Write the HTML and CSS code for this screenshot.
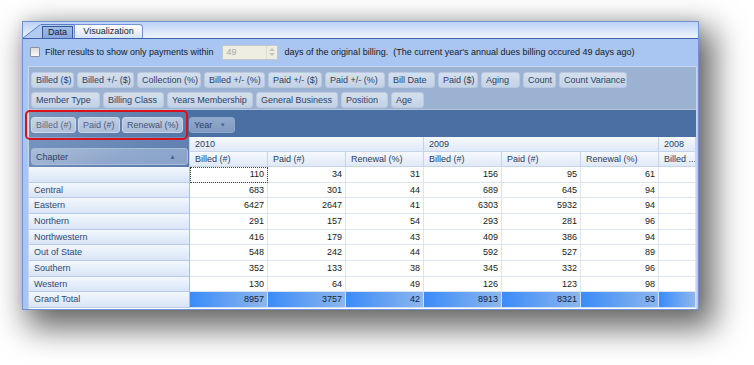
FILE: index.html
```html
<!DOCTYPE html>
<html>
<head>
<meta charset="utf-8">
<link rel="stylesheet" href="styles.css">
</head>
<body>
<div class="window">
  <div class="tabstrip">
    <svg class="slant" width="18" height="14" viewBox="0 0 18 14"><polygon points="0,14 17.5,0.5 18,0.5 18,14" fill="#b3cbf0"/><line x1="0" y1="14" x2="17.5" y2="0.5" stroke="#5a7ec3" stroke-width="1"/></svg>
    <div class="tab tab-active"><span class="tab-label">Data</span></div>
    <div class="tab tab-plain">Visualization</div>
  </div>
  <div class="filter">
    <span class="check"></span>
    <span class="ftext">Filter results to show only payments within</span>
    <span class="spin"><span class="spin-val">49</span><span class="spin-btns"><i class="up"></i><i class="down"></i></span></span>
    <span class="ftext">days of the original billing.&nbsp; (The current year's annual dues billing occured 49 days ago)</span>
  </div>
  <div class="panel">
    <div class="fields">
      <div class="frow r1">
        <div class="fbtn">Billed ($)</div>
        <div class="fbtn">Billed +/- ($)</div>
        <div class="fbtn">Collection (%)</div>
        <div class="fbtn">Billed +/- (%)</div>
        <div class="fbtn">Paid +/- ($)</div>
        <div class="fbtn">Paid +/- (%)</div>
        <div class="fbtn">Bill Date</div>
        <div class="fbtn">Paid ($)</div>
        <div class="fbtn">Aging</div>
        <div class="fbtn">Count</div>
        <div class="fbtn">Count Variance</div>
      </div>
      <div class="frow r2">
        <div class="fbtn">Member Type</div>
        <div class="fbtn">Billing Class</div>
        <div class="fbtn">Years Membership</div>
        <div class="fbtn">General Business</div>
        <div class="fbtn">Position</div>
        <div class="fbtn">Age</div>
      </div>
    </div>
    <div class="pivot">
      <div class="band">
        <div class="datafields">
          <div class="fbtn dbtn w45">Billed (#)</div>
          <div class="fbtn dbtn w42">Paid (#)</div>
          <div class="fbtn dbtn w61">Renewal (%)</div>
        </div>
        <div class="fbtn year">Year <span class="arrow">&#9660;</span></div>
      </div>
      <div class="rowarea"><div class="chapter"><span>Chapter</span><span class="sort">&#9650;</span></div></div>

      <div class="ch span3">2010</div>
      <div class="ch span3">2009</div>
      <div class="ch">2008</div>
      <div class="ch">Billed (#)</div>
      <div class="ch">Paid (#)</div>
      <div class="ch">Renewal (%)</div>
      <div class="ch">Billed (#)</div>
      <div class="ch">Paid (#)</div>
      <div class="ch">Renewal (%)</div>
      <div class="ch">Billed ...</div>

      <div class="rh"></div>
      <div class="c focus">110</div><div class="c">34</div><div class="c">31</div><div class="c">156</div><div class="c">95</div><div class="c">61</div><div class="c"></div>
      <div class="rh">Central</div>
      <div class="c">683</div><div class="c">301</div><div class="c">44</div><div class="c">689</div><div class="c">645</div><div class="c">94</div><div class="c"></div>
      <div class="rh">Eastern</div>
      <div class="c">6427</div><div class="c">2647</div><div class="c">41</div><div class="c">6303</div><div class="c">5932</div><div class="c">94</div><div class="c"></div>
      <div class="rh">Northern</div>
      <div class="c">291</div><div class="c">157</div><div class="c">54</div><div class="c">293</div><div class="c">281</div><div class="c">96</div><div class="c"></div>
      <div class="rh">Northwestern</div>
      <div class="c">416</div><div class="c">179</div><div class="c">43</div><div class="c">409</div><div class="c">386</div><div class="c">94</div><div class="c"></div>
      <div class="rh">Out of State</div>
      <div class="c">548</div><div class="c">242</div><div class="c">44</div><div class="c">592</div><div class="c">527</div><div class="c">89</div><div class="c"></div>
      <div class="rh">Southern</div>
      <div class="c">352</div><div class="c">133</div><div class="c">38</div><div class="c">345</div><div class="c">332</div><div class="c">96</div><div class="c"></div>
      <div class="rh">Western</div>
      <div class="c">130</div><div class="c">64</div><div class="c">49</div><div class="c">126</div><div class="c">123</div><div class="c">98</div><div class="c"></div>
      <div class="rh">Grand Total</div>
      <div class="c gt">8957</div><div class="c gt">3757</div><div class="c gt">42</div><div class="c gt">8913</div><div class="c gt">8321</div><div class="c gt">93</div><div class="c gt"></div>

      <div class="annot"></div>
    </div>
  </div>
</div>
</body>
</html>
```
FILE: styles.css
```css
* { box-sizing: border-box; }
html, body { margin: 0; padding: 0; background: #fff; }
body {
  font-family: "Liberation Sans", Arial, sans-serif;
  font-size: 9px;
  color: #1d1d1d;
  width: 754px;
  height: 365px;
  overflow: hidden;
}
.window {
  margin: 21px 0 0 22px;
  width: 677px;
  height: 289px;
  border: 1px solid #6f93d2;
  background: #a9c5f1;
  box-shadow: 10px 13px 30px 5px rgba(0, 0, 0, 0.6), 0 -2px 10px rgba(0, 0, 0, 0.08);
  display: flex;
  flex-direction: column;
}
.tabstrip {
  height: 17px;
  flex: none;
  background: linear-gradient(#bcd2f5, #eef4fd);
  border-bottom: 1px solid #3d62ad;
  display: flex;
  align-items: flex-end;
}
.slant { display: block; flex: none; }
.tab {
  height: 14px;
  line-height: 12px;
  text-align: center;
  color: #111a30;
}
.tab-active {
  width: 33px;
  background: #b3cbf0;
  border-top: 1px solid #5a7ec3;
  padding: 1px 1px 0 1px;
}
.tab-label {
  display: block;
  height: 12px;
  line-height: 10px;
  border: 1px solid #36579a;
  border-bottom: none;
  background: linear-gradient(#9fbde8, #86a8dd);
}
.tab-plain {
  width: 69px;
  border: 1px solid #6e92d2;
  border-bottom: none;
  border-radius: 0 4px 0 0;
  background: linear-gradient(#ffffff, #d6e4fa);
}
.filter {
  height: 26px;
  flex: none;
  display: flex;
  align-items: center;
  padding-left: 7px;
  color: #141a28;
}
.check {
  width: 10px;
  height: 10px;
  border: 1px solid #8d8f94;
  border-radius: 1px;
  background: linear-gradient(#dcdcdc, #fafafa);
  margin-right: 5px;
}
.spin {
  display: flex;
  width: 56px;
  height: 15px;
  margin: 0 7px 0 8px;
  border: 1px solid #c4c7cc;
  background: #eeeee3;
}
.spin-val {
  flex: 1;
  padding-left: 4px;
  line-height: 13px;
  color: #a9a99e;
}
.spin-btns {
  width: 11px;
  display: flex;
  flex-direction: column;
  align-items: center;
  justify-content: space-around;
  border-left: 1px solid #dcdcd4;
  padding: 2px 0;
}
.spin-btns i {
  width: 0;
  height: 0;
  border-left: 3px solid transparent;
  border-right: 3px solid transparent;
}
.spin-btns .up { border-bottom: 3px solid #c3c3bb; }
.spin-btns .down { border-top: 3px solid #c3c3bb; }

.panel {
  flex: 1;
  margin: 1px 1px 0 5px;
  border: 1px solid #c9d6e8;
  border-bottom: none;
  display: flex;
  flex-direction: column;
  background: #fff;
}
.fields {
  height: 43px;
  flex: none;
  background: #9bb2d3;
  border-bottom: 1px solid #b7c7de;
  padding: 5px 2px 0 2px;
  display: flex;
  flex-direction: column;
  gap: 4px;
}
.frow { display: flex; gap: 3px; }
.fbtn {
  height: 16px;
  line-height: 14px;
  padding: 0 0 0 4px;
  border: 1px solid #b9c9df;
  border-radius: 3px;
  background: linear-gradient(#d5dfed, #c4d2e6);
  color: #2c4266;
  white-space: nowrap;
  overflow: hidden;
  flex: none;
}
.r1 .fbtn:nth-child(1) { width: 43px; }
.r1 .fbtn:nth-child(2) { width: 57px; }
.r1 .fbtn:nth-child(3) { width: 64px; }
.r1 .fbtn:nth-child(4) { width: 61px; }
.r1 .fbtn:nth-child(5) { width: 54px; }
.r1 .fbtn:nth-child(6) { width: 60px; }
.r1 .fbtn:nth-child(7) { width: 47px; }
.r1 .fbtn:nth-child(8) { width: 40px; }
.r1 .fbtn:nth-child(9) { width: 39px; }
.r1 .fbtn:nth-child(10) { width: 33px; }
.r1 .fbtn:nth-child(11) { width: 68px; }
.r2 .fbtn:nth-child(1) { width: 69px; }
.r2 .fbtn:nth-child(2) { width: 61px; }
.r2 .fbtn:nth-child(3) { width: 86px; }
.r2 .fbtn:nth-child(4) { width: 82px; }
.r2 .fbtn:nth-child(5) { width: 47px; }
.r2 .fbtn:nth-child(6) { width: 33px; }

.pivot {
  position: relative;
  flex: 1;
  display: grid;
  grid-template-columns: 161px 78px 78px 78px 78px 79px 78px 1fr;
  grid-template-rows: 27px 15px 15px repeat(9, 15.67px);
  background: #fff;
}
.band {
  grid-column: 1 / -1;
  background: #4a6fa3;
  display: flex;
  align-items: flex-start;
  padding: 7px 0 0 2px;
  gap: 6px;
}
.datafields { display: flex; gap: 2px; }
.dbtn {
  border-color: #c2d0e4;
  background: linear-gradient(#b3c4dd, #a0b4d2);
}
.w45 { width: 45px; }
.w42 { width: 42px; }
.w61 { width: 61px; }
.year {
  width: 46px;
  border-color: #8ea6c9;
  background: linear-gradient(#91a9cc, #8299bf);
  color: #2c4166;
}
.arrow { font-size: 6px; color: #48648f; margin-left: 5px; vertical-align: 1px; }
.rowarea {
  grid-column: 1;
  grid-row: 2 / 4;
  background: linear-gradient(160deg, #7795c0, #6485b3 60%, #5a7aab);
  padding: 11px 0 2px 2px;
  border-right: 1px solid #c6d4e8;
}
.chapter {
  height: 17px;
  width: 157px;
  border: 1px solid #a9bcd8;
  border-radius: 3px;
  background: linear-gradient(160deg, #a9bcd8, #8fa8cc 55%, #8aa3c8);
  color: #2a416b;
  display: flex;
  justify-content: space-between;
  align-items: center;
  padding: 0 11px 0 4px;
}
.sort { font-size: 7px; color: #4d6a95; }
.ch {
  background: linear-gradient(#f6f9fe, #e0e9f7);
  border-right: 1px solid #c6d4e8;
  border-bottom: 1px solid #c6d4e8;
  color: #273c63;
  line-height: 14px;
  padding-left: 5px;
  white-space: nowrap;
  overflow: hidden;
}
.span3 { grid-column: span 3; }
.rh {
  grid-column: 1;
  background: linear-gradient(#f2f7fd, #d9e5f6);
  border-bottom: 1px solid #b9cce7;
  border-right: 1px solid #a7bfe0;
  color: #2a4878;
  padding-left: 5px;
  line-height: 14px;
  white-space: nowrap;
}
.c {
  border-right: 1px solid #dbe4f0;
  border-bottom: 1px solid #dbe4f0;
  text-align: right;
  padding-right: 3px;
  line-height: 14px;
  color: #181818;
}
.focus { outline: 1px dotted #444; outline-offset: -1px; }
.gt {
  background: linear-gradient(90deg, #3a8cf8, #8db6ee);
  border-right: 1px solid #cfe0f6;
  border-bottom: 1px solid #cfe0f6;
  color: #15243a;
}
.annot {
  position: absolute;
  left: -4px;
  top: 0;
  width: 163px;
  height: 30px;
  border: 2px solid #d8121c;
  border-radius: 5px;
  background: linear-gradient(155deg, rgba(255,255,255,0.28), rgba(255,255,255,0.12) 55%, rgba(255,255,255,0.06));
  pointer-events: none;
}
```
